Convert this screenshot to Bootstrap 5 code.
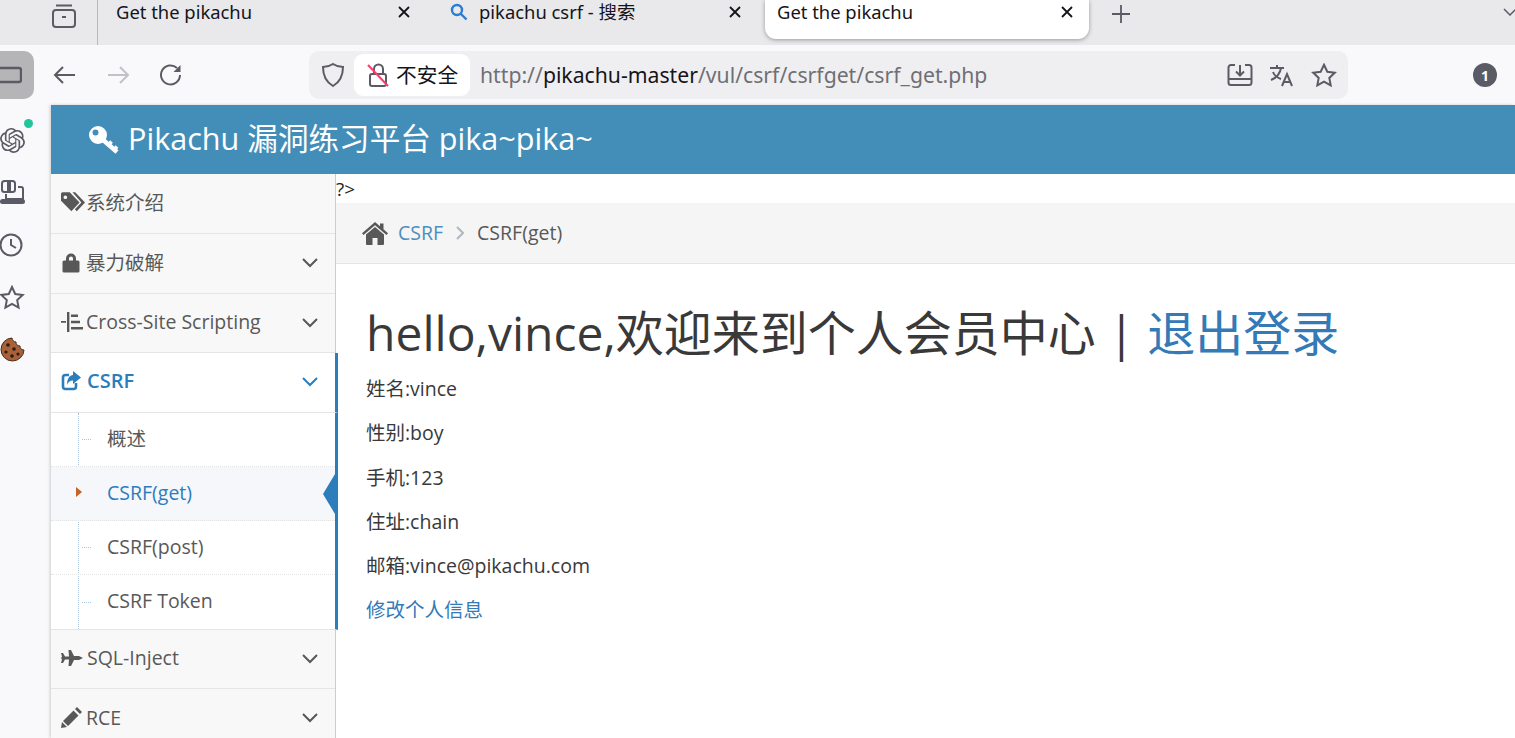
<!DOCTYPE html>
<html>
<head>
  <title>Get the pikachu</title>
  <meta charset="UTF-8">
  <link href="https://cdn.jsdelivr.net/npm/bootstrap@5.3.2/dist/css/bootstrap.min.css" rel="stylesheet">
  <style>
    html, body { height: 738px; overflow: hidden; }
    body {
      background: #f9f9fb;
      color: #393939;
      font-family: "Open Sans", "Noto Sans CJK SC", sans-serif;
    }
    svg { display: block; flex: none; }

    /* browser tabs */
    .tab-strip { height: 45px; background: #e9e9eb; font-size: 18.4px; color: #15141a; font-family: "Noto Sans", "Noto Sans CJK SC", sans-serif; }
    .tab-box { width: 98px; height: 45px; border-right: 1px solid #b9b9bd; padding-left: 52px; }
    .tab-item { height: 39px; padding-bottom: 15px; position: relative; }
    .tab-a { width: 336px; padding-left: 18px; padding-right: 24px; }
    .tab-b { width: 331px; padding-left: 16px; padding-right: 24px; }
    .tab-b .search-ico { margin-right: 11px; }
    .tab-c { width: 324px; padding-left: 12px; padding-right: 16px; background: #fff; border-radius: 0 0 11px 11px; box-shadow: 0 1px 4px rgba(0,0,0,.35); }
    .tab-plus { margin-left: 22px; }
    .tab-more { margin-left: auto; margin-right: -2px; }

    /* browser toolbar */
    .tool-strip { height: 60px; }
    .rail-toggle { width: 34px; height: 48px; background: #b5b5b7; border-radius: 0 10px 10px 0; overflow: hidden; }
    .nav-btns { width: 275px; padding-left: 18px; gap: 28px; }
    .nav-btns svg:first-child { margin-right: -1px; }
    .url-box { width: 1039px; height: 48px; background: #efeff1; border-radius: 10px; padding-left: 12px; }
    .insecure { width: 116px; height: 42px; background: #fff; border-radius: 9px; margin-left: 9px; padding-left: 13px; gap: 7px; font-size: 20.7px; color: #15141a; font-family: "Noto Sans CJK SC", sans-serif; }
    .url-text { margin-left: 10px; font-size: 21.2px; color: #6f6f75; font-family: "Noto Sans", sans-serif; }
    .url-text b { font-weight: 400; color: #15141a; }
    .url-actions { margin-left: auto; margin-right: 11px; gap: 16px; }
    .ext-badge { margin-left: 125px; width: 24px; height: 24px; border-radius: 50%; background: #5b5b66; color: #fff; font-size: 14px; font-weight: 700; }

    /* left browser rail */
    .browser-rail { width: 51px; padding-top: 23px; gap: 26.5px; position: relative; }
    .rail-dot { position: absolute; left: 24px; top: 14px; width: 9px; height: 9px; border-radius: 50%; background: #21c59b; }

    /* page */
    .page-wrap { width: 1464px; height: 633px; background: #fff; box-shadow: -1px 0 3px rgba(0,0,0,.18); }
    .page-head { height: 69px; background: #438eb9; color: #fff; font-size: 30.6px; padding: 0 0 0 37px; gap: 8px; }
    .page-head span { position: relative; top: -1px; }
    .page-body { height: 564px; }

    .side-menu { width: 285px; border-right: 1px solid #ccc; background: #f8f8f8; font-size: 19.5px; color: #585858; flex: none; position: relative; z-index: 1; }
    .side-row { height: 59.5px; padding: 0 17px 2px 10px; border-bottom: 1px solid #e5e5e5; }
    .side-row:first-child { height: 60px; }
    .side-row .chev { margin-left: auto; margin-top: 2px; }
    .menu-ico { width: 25px; flex: none; }
    .menu-ico.wide { width: 26px; }
    .side-row.is-open { background: #fff; color: #2b7dbc; font-weight: 600; font-size: 20px; border-right: 3px solid #2b7dbc; margin-right: -3px; }
    .side-sub { background: #fff; border-right: 3px solid #2b7dbc; margin: 0 -3px 0 0; padding: 0; position: relative; list-style: none; border-bottom: 1px solid #e5e5e5; }
    .side-sub::before { content: ""; position: absolute; left: 27px; top: 0; bottom: 0; border-left: 1px dotted #a9c4dc; }
    .side-sub li { height: 54px; padding-left: 56px; padding-bottom: 1px; border-bottom: 1px dotted #e4e4e4; position: relative; display: flex; align-items: center; }
    .side-sub li:last-child { border-bottom: 0; }
    .side-sub li::before { content: ""; position: absolute; left: 31px; top: 50%; width: 9px; border-top: 1px dotted #a9c4dc; }
    .side-sub li.is-here { background: #f5f7fb; color: #2b7dbc; }
    .side-sub li.is-here::before { left: 25px; top: 50%; margin-top: -6px; width: 0; border: 0; border-left: 6px solid #c86125; border-top: 5.5px solid transparent; border-bottom: 5.5px solid transparent; }
    .here-caret { position: absolute; right: 0; top: 7px; width: 0; height: 0; border-right: 12px solid #2b7dbc; border-top: 20px solid transparent; border-bottom: 20px solid transparent; }

    .main-pane { flex: 1; min-width: 0; }
    .stray { height: 29px; font-size: 19px; line-height: 31px; color: #222; }
    .crumbs { height: 61px; background: #f5f5f5; border-bottom: 1px solid #e5e5e5; padding-left: 26px; font-size: 19.5px; color: #585858; }
    .crumbs a { color: #4c8fbd; text-decoration: none; margin-left: 10px; }
    .crumb-sep { margin: 0 13px; }
    .member-box { padding: 35px 30px 0; font-size: 19.5px; }
    .member-title { font-size: 48px; line-height: 68px; font-weight: 400; color: #393939; margin: 0 0 7px; }
    .member-title a, .edit-link { color: #337ab7; text-decoration: none; }
    .member-box p { margin: 0 0 14.3px; line-height: 30px; }
  </style>
</head>
<body>

<div class="tab-strip d-flex align-items-start">
  <div class="tab-box d-flex align-items-start pt-1">
    <svg width="25" height="24" viewBox="0 0 25 24" fill="none" stroke="#5b5b66" stroke-width="2"><rect x="1" y="6" width="22" height="17" rx="3"/><path d="M4 1.500h16M10 13h4"/></svg>
  </div>
  <div class="tab-item tab-a d-flex align-items-center justify-content-between">
    <span>Get the pikachu</span>
    <svg width="12" height="12" viewBox="0 0 12 12" stroke="#15141a" stroke-width="1.8"><path d="M1 1l10 10M11 1L1 11"/></svg>
  </div>
  <div class="tab-item tab-b d-flex align-items-center">
    <svg class="search-ico" width="18" height="18" viewBox="0 0 18 18" fill="none" stroke="#2b7cd3" stroke-width="2.4"><circle cx="7" cy="7" r="5"/><path d="M11 11l5.500 5.500"/></svg>
    <span>pikachu csrf - 搜索</span>
    <svg class="ms-auto" width="12" height="12" viewBox="0 0 12 12" stroke="#15141a" stroke-width="1.8"><path d="M1 1l10 10M11 1L1 11"/></svg>
  </div>
  <div class="tab-item tab-c d-flex align-items-center justify-content-between">
    <span>Get the pikachu</span>
    <svg width="12" height="12" viewBox="0 0 12 12" stroke="#15141a" stroke-width="1.8"><path d="M1 1l10 10M11 1L1 11"/></svg>
  </div>
  <svg class="tab-plus mt-1" width="20" height="20" viewBox="0 0 20 20" stroke="#5b5b66" stroke-width="1.8"><path d="M10 1v18M1 10h18"/></svg>
  <svg class="tab-more mt-2" width="14" height="8" viewBox="0 0 14 8" fill="none" stroke="#5b5b66" stroke-width="1.5"><path d="M1 1l6 6 6-6"/></svg>
</div>

<div class="tool-strip d-flex align-items-center">
  <div class="rail-toggle d-flex align-items-center">
    <svg width="22" height="20" viewBox="0 0 22 20" fill="none" stroke="#5b5b66" stroke-width="2.4"><rect x="-3" y="3" width="24" height="14" rx="2"/></svg>
  </div>
  <div class="nav-btns d-flex align-items-center">
    <svg width="26" height="24" viewBox="0 0 26 24" fill="none" stroke="#5b5b66" stroke-width="2"><path d="M23 12H3M11 4l-8 8 8 8"/></svg>
    <svg width="26" height="24" viewBox="0 0 26 24" fill="none" stroke="#c2c2c6" stroke-width="2"><path d="M3 12h20M15 4l8 8-8 8"/></svg>
    <svg width="24" height="24" viewBox="0 0 24 24" fill="none" stroke="#5b5b66" stroke-width="2"><path d="M21 12a9.500 9.500 0 1 1-3-7"/><path d="M21.500 2v7h-7z" fill="#5b5b66" stroke="none"/></svg>
  </div>
  <div class="url-box d-flex align-items-center">
    <svg width="24" height="26" viewBox="0 0 24 26" fill="none" stroke="#5b5b66" stroke-width="2"><path d="M12 2c3 2 6 3 10 3 0 9-3 15-10 19C5 20 2 14 2 5c4 0 7-1 10-3z"/></svg>
    <div class="insecure d-flex align-items-center">
      <svg width="22" height="26" viewBox="0 0 22 26" fill="none"><path d="M7 12V7a4.500 4.500 0 0 1 9 0v5" stroke="#5b5b66" stroke-width="2"/><rect x="3" y="12" width="16" height="12" rx="2" stroke="#5b5b66" stroke-width="2"/><path d="M1 3l20 21" stroke="#ff3b6b" stroke-width="2"/></svg>
      <span>不安全</span>
    </div>
    <div class="url-text">http://<b>pikachu-master</b>/vul/csrf/csrfget/csrf_get.php</div>
    <div class="url-actions d-flex align-items-center">
      <svg width="26" height="24" viewBox="0 0 26 24" fill="none" stroke="#5b5b66" stroke-width="2"><path d="M8 2H4a2.500 2.500 0 0 0-2.500 2.500v15A2.500 2.500 0 0 0 4 22h18a2.500 2.500 0 0 0 2.500-2.500v-15A2.500 2.500 0 0 0 22 2h-4M2 16h22M13 2v10M9 8.500l4 4 4-4"/></svg>
      <svg width="26" height="24" viewBox="0 0 26 24" fill="none" stroke="#5b5b66" stroke-width="2"><path d="M1 5h14M8 2v3M12 5c-1 6-5 10-10 12M4 9c1 3 5 6 8 7M13 23l5-12 5 12M15 19h6"/></svg>
      <svg width="26" height="24" viewBox="0 0 26 24" fill="none" stroke="#5b5b66" stroke-width="2"><path d="M13 1.800l3.300 7 7.500.9-5.500 5.200 1.400 7.500-6.700-3.700-6.700 3.700 1.400-7.500L2.200 9.700l7.500-.9z"/></svg>
    </div>
  </div>
  <div class="ext-badge d-flex align-items-center justify-content-center">1</div>
</div>

<div class="d-flex">
  <div class="browser-rail d-flex flex-column">
    <span class="rail-dot"></span>
    <svg width="25" height="25" viewBox="0 0 24 24" fill="#5b5b66"><path d="M22.2819 9.8211a5.9847 5.9847 0 0 0-.5157-4.9108 6.0462 6.0462 0 0 0-6.5098-2.9A6.0651 6.0651 0 0 0 4.9807 4.1818a5.9847 5.9847 0 0 0-3.9977 2.9 6.0462 6.0462 0 0 0 .7427 7.0966 5.98 5.98 0 0 0 .511 4.9107 6.051 6.051 0 0 0 6.5146 2.9001A5.9847 5.9847 0 0 0 13.2599 24a6.0557 6.0557 0 0 0 5.7718-4.2058 5.9894 5.9894 0 0 0 3.9977-2.9001 6.0557 6.0557 0 0 0-.7475-7.0729zm-9.022 12.6081a4.4755 4.4755 0 0 1-2.8764-1.0408l.1419-.0804 4.7783-2.7582a.7948.7948 0 0 0 .3927-.6813v-6.7369l2.02 1.1686a.071.071 0 0 1 .038.052v5.5826a4.504 4.504 0 0 1-4.4945 4.4944zm-9.6607-4.1254a4.4708 4.4708 0 0 1-.5346-3.0137l.142.0852 4.783 2.7582a.7712.7712 0 0 0 .7806 0l5.8428-3.3685v2.3324a.0804.0804 0 0 1-.0332.0615L9.74 19.9502a4.4992 4.4992 0 0 1-6.1408-1.6464zM2.3408 7.8956a4.485 4.485 0 0 1 2.3655-1.9728V11.6a.7664.7664 0 0 0 .3879.6765l5.8144 3.3543-2.0201 1.1685a.0757.0757 0 0 1-.071 0l-4.8303-2.7865A4.504 4.504 0 0 1 2.3408 7.872zm16.5963 3.8558L13.1038 8.364 15.1192 7.2a.0757.0757 0 0 1 .071 0l4.8303 2.7913a4.4944 4.4944 0 0 1-.6765 8.1042v-5.6772a.79.79 0 0 0-.407-.667zm2.0107-3.0231l-.142-.0852-4.7735-2.7818a.7759.7759 0 0 0-.7854 0L9.409 9.2297V6.8974a.0662.0662 0 0 1 .0284-.0615l4.8303-2.7866a4.4992 4.4992 0 0 1 6.6802 4.66zM8.3065 12.863l-2.02-1.1638a.0804.0804 0 0 1-.038-.0567V6.0742a4.4992 4.4992 0 0 1 7.3757-3.4537l-.142.0805L8.704 5.459a.7948.7948 0 0 0-.3927.6813zm1.0976-2.3654l2.602-1.4998 2.6069 1.4998v2.9994l-2.5974 1.4997-2.6067-1.4997Z"/></svg>
    <svg width="26" height="26" viewBox="0 0 26 26" fill="none" stroke="#5b5b66" stroke-width="2"><rect x="2" y="1" width="13" height="11" rx="2.500"/><path d="M9 1v11" stroke-width="4"/><path d="M18 7h3a2 2 0 0 1 2 2v10H6v-5"/><rect x="1" y="20" width="23" height="3" rx="1.500" fill="#5b5b66"/></svg>
    <svg width="26" height="26" viewBox="0 0 26 26" fill="none" stroke="#5b5b66" stroke-width="2"><circle cx="11" cy="13" r="10.500"/><path d="M11 7v6l5 3"/></svg>
    <svg width="26" height="26" viewBox="0 0 26 26" fill="none" stroke="#5b5b66" stroke-width="2"><path d="M12 2l3.200 7 7.500.9-5.500 5.200 1.400 7.500-6.600-3.700-6.600 3.700 1.400-7.500L1.300 9.900l7.500-.9z"/></svg>
    <svg width="26" height="26" viewBox="0 0 26 26"><path d="M12 1a11.500 11.500 0 1 0 12 12c-3 0-4-2-4-4-3 0-4-2-4-4-2 0-4-2-4-4z" fill="#a8623a" stroke="#4a2c1a"/><g fill="#2e1a10"><circle cx="8" cy="8" r="1.800"/><circle cx="14" cy="12" r="1.800"/><circle cx="6" cy="15" r="1.600"/><circle cx="12" cy="19" r="1.800"/><circle cx="18" cy="17" r="1.600"/></g></svg>
  </div>

  <div class="page-wrap d-flex flex-column">
    <nav class="navbar page-head d-flex align-items-center justify-content-start flex-nowrap">
      <svg width="32" height="30" viewBox="0 0 32 30" fill="none"><path d="M10 1a9 9 0 1 1 0 18 9 9 0 0 1 0-18zM7.500 4.500a3 3 0 1 0 0 6 3 3 0 0 0 0-6z" fill="#fff" fill-rule="evenodd"/><path d="M14 14l15 13" stroke="#fff" stroke-width="4.500"/><path d="M20.500 20l3-3.500M26 25l3-3.500" stroke="#fff" stroke-width="3.600"/></svg>
      <span>Pikachu 漏洞练习平台 pika~pika~</span>
    </nav>
    <div class="page-body d-flex">
      <div class="side-menu">
        <div class="side-row d-flex align-items-center">
          <span class="menu-ico"><svg width="24" height="21" viewBox="0 0 22 19" fill="#585858"><path d="M0 1.500A1.500 1.500 0 0 1 1.500 0H8l9 9.500-7.500 8L0 8zM4 3a1.700 1.700 0 1 0 0 3.400A1.700 1.700 0 0 0 4 3z" fill-rule="evenodd"/><path d="M10.500 0H13l9 9.500-7.500 8-1.800-1.800 6-6.200z"/></svg></span>
          <span>系统介绍</span>
        </div>
        <div class="side-row d-flex align-items-center">
          <span class="menu-ico"><svg width="20" height="21" viewBox="0 0 20 20" fill="#585858"><path d="M5 8V6a5 5 0 0 1 10 0v2h2a1.500 1.500 0 0 1 1.500 1.500v9A1.500 1.500 0 0 1 17 20H3a1.500 1.500 0 0 1-1.500-1.500v-9A1.500 1.500 0 0 1 3 8zm3 0h4V6a2 2 0 0 0-4 0z" fill-rule="evenodd"/></svg></span>
          <span>暴力破解</span>
          <svg class="chev" width="16" height="10" viewBox="0 0 16 10" fill="none" stroke="#585858" stroke-width="2"><path d="M1 1l7 7 7-7"/></svg>
        </div>
        <div class="side-row d-flex align-items-center">
          <span class="menu-ico"><svg width="22" height="20" viewBox="0 0 22 20" fill="#585858"><path d="M0 9h5v1.800H0zM6 0h2.400v20H6zM10 2.500h7v2.600h-7zM10 8.700h9v2.600h-9zM10 15h12v2.600H10z"/></svg></span>
          <span>Cross-Site Scripting</span>
          <svg class="chev" width="16" height="10" viewBox="0 0 16 10" fill="none" stroke="#585858" stroke-width="2"><path d="M1 1l7 7 7-7"/></svg>
        </div>
        <div class="side-row is-open d-flex align-items-center">
          <span class="menu-ico wide"><svg width="20" height="20" viewBox="0 0 20 20" fill="none" stroke="#2b7dbc" stroke-width="2.600"><path d="M15 12v3.500a2.500 2.500 0 0 1-2.500 2.500h-8A2.500 2.500 0 0 1 2 15.500v-9A2.500 2.500 0 0 1 4.500 4H8"/><path d="M12 0l8 6.500-8 6.500V9.500C9 9.500 7 11 6 14c0-6 2-9.500 6-10z" fill="#2b7dbc" stroke="none"/></svg></span>
          <span>CSRF</span>
          <svg class="chev" width="16" height="10" viewBox="0 0 16 10" fill="none" stroke="#2b7dbc" stroke-width="2"><path d="M1 1l7 7 7-7"/></svg>
        </div>
        <ul class="side-sub">
          <li>概述</li>
          <li class="is-here">CSRF(get)<span class="here-caret"></span></li>
          <li>CSRF(post)</li>
          <li>CSRF Token</li>
        </ul>
        <div class="side-row d-flex align-items-center">
          <span class="menu-ico wide"><svg width="22" height="16" viewBox="0 0 22 16" fill="#585858"><path d="M0 3h2l2 3.500h4L7.500 0H10l3 6h5l4 2-4 2h-5l-3 6H7.500L8 9.500H4L2 13H0l1-3.500L0 8l1-1.500z"/></svg></span>
          <span>SQL-Inject</span>
          <svg class="chev" width="16" height="10" viewBox="0 0 16 10" fill="none" stroke="#585858" stroke-width="2"><path d="M1 1l7 7 7-7"/></svg>
        </div>
        <div class="side-row d-flex align-items-center">
          <span class="menu-ico"><svg width="21" height="21" viewBox="0 0 21 21" fill="#585858"><path d="M16 0l5 5-2 2-5-5zM12.500 3.500l5 5L7 19l-5-5zM1 15l5 5-6 1z"/></svg></span>
          <span>RCE</span>
          <svg class="chev" width="16" height="10" viewBox="0 0 16 10" fill="none" stroke="#585858" stroke-width="2"><path d="M1 1l7 7 7-7"/></svg>
        </div>
      </div>
      <div class="main-pane">
        <div class="stray">?&gt;</div>
        <div class="crumbs d-flex align-items-center">
          <svg width="26" height="23" viewBox="0 0 26 23" fill="#585858"><path d="M13 0l5 4.300V1.500h3.500v5.800L26 11.200l-1.500 1.700L13 3.200 1.500 12.900 0 11.200z"/><path d="M13 5l9 7.500v9.500a1 1 0 0 1-1 1h-5.500v-7h-5v7H5a1 1 0 0 1-1-1v-9.500z"/></svg>
          <a href="#">CSRF</a>
          <svg class="crumb-sep" width="8" height="14" viewBox="0 0 8 14" fill="none" stroke="#b2b6bf" stroke-width="2"><path d="M1 1l6 6-6 6"/></svg>
          <span>CSRF(get)</span>
        </div>
        <div class="member-box">
          <h1 class="member-title">hello,vince,欢迎来到个人会员中心 | <a href="#">退出登录</a></h1>
          <p>姓名:vince</p>
          <p>性别:boy</p>
          <p>手机:123</p>
          <p>住址:chain</p>
          <p>邮箱:vince@pikachu.com</p>
          <a class="edit-link" href="#">修改个人信息</a>
        </div>
      </div>
    </div>
  </div>
</div>

<script src="https://cdn.jsdelivr.net/npm/bootstrap@5.3.2/dist/js/bootstrap.bundle.min.js"></script>
</body>
</html>
